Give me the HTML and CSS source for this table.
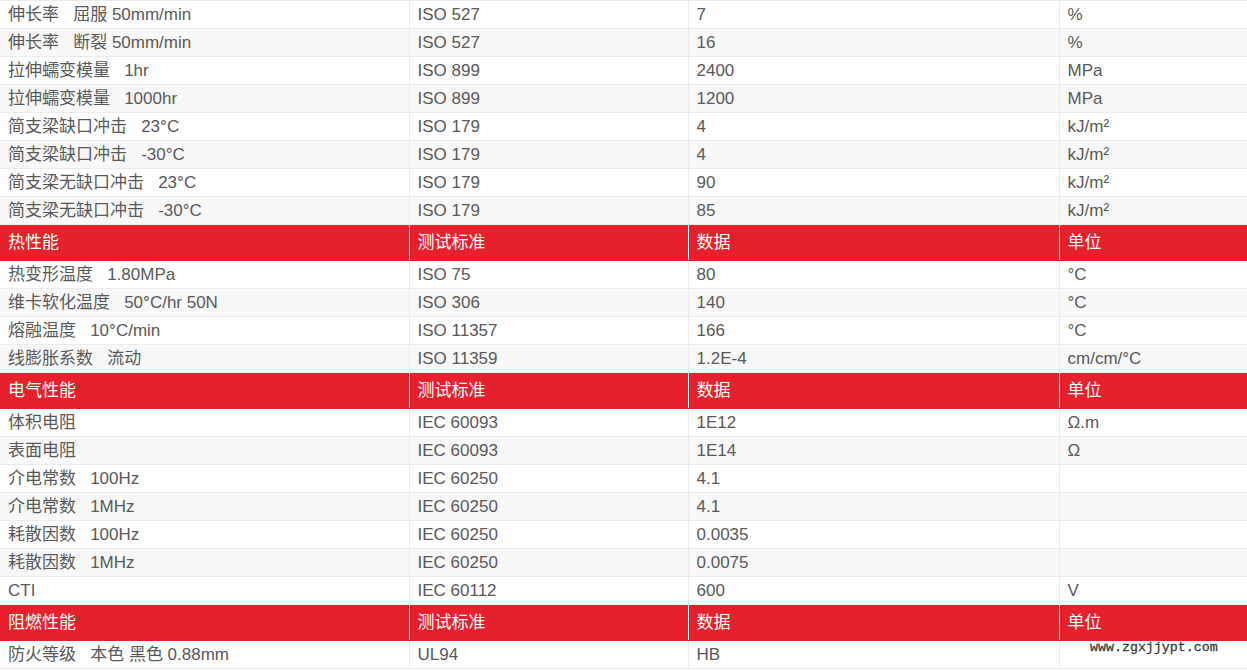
FILE: index.html
```html
<!DOCTYPE html>
<html lang="zh">
<head>
<meta charset="utf-8">
<title>物性表</title>
<link rel="stylesheet" href="styles.css">
</head>
<body>
<div class="wrap">
<table class="spec">
  <colgroup>
    <col class="c1"><col class="c2"><col class="c3"><col class="c4">
  </colgroup>
  <tbody>
    <tr><td>伸长率&nbsp;&nbsp; 屈服 50mm/min</td><td>ISO 527</td><td>7</td><td>%</td></tr>
    <tr class="alt"><td>伸长率&nbsp;&nbsp; 断裂 50mm/min</td><td>ISO 527</td><td>16</td><td>%</td></tr>
    <tr><td>拉伸蠕变模量&nbsp;&nbsp; 1hr</td><td>ISO 899</td><td>2400</td><td>MPa</td></tr>
    <tr class="alt"><td>拉伸蠕变模量&nbsp;&nbsp; 1000hr</td><td>ISO 899</td><td>1200</td><td>MPa</td></tr>
    <tr><td>简支梁缺口冲击&nbsp;&nbsp; 23°C</td><td>ISO 179</td><td>4</td><td>kJ/m²</td></tr>
    <tr class="alt"><td>简支梁缺口冲击&nbsp;&nbsp; -30°C</td><td>ISO 179</td><td>4</td><td>kJ/m²</td></tr>
    <tr><td>简支梁无缺口冲击&nbsp;&nbsp; 23°C</td><td>ISO 179</td><td>90</td><td>kJ/m²</td></tr>
    <tr class="alt"><td>简支梁无缺口冲击&nbsp;&nbsp; -30°C</td><td>ISO 179</td><td>85</td><td>kJ/m²</td></tr>
    <tr class="head"><td>热性能</td><td>测试标准</td><td>数据</td><td>单位</td></tr>
    <tr><td>热变形温度&nbsp;&nbsp; 1.80MPa</td><td>ISO 75</td><td>80</td><td>°C</td></tr>
    <tr class="alt"><td>维卡软化温度&nbsp;&nbsp; 50°C/hr 50N</td><td>ISO 306</td><td>140</td><td>°C</td></tr>
    <tr><td>熔融温度&nbsp;&nbsp; 10°C/min</td><td>ISO 11357</td><td>166</td><td>°C</td></tr>
    <tr class="alt"><td>线膨胀系数&nbsp;&nbsp; 流动</td><td>ISO 11359</td><td>1.2E-4</td><td>cm/cm/°C</td></tr>
    <tr class="head"><td>电气性能</td><td>测试标准</td><td>数据</td><td>单位</td></tr>
    <tr><td>体积电阻</td><td>IEC 60093</td><td>1E12</td><td>Ω.m</td></tr>
    <tr class="alt"><td>表面电阻</td><td>IEC 60093</td><td>1E14</td><td>Ω</td></tr>
    <tr><td>介电常数&nbsp;&nbsp; 100Hz</td><td>IEC 60250</td><td>4.1</td><td></td></tr>
    <tr class="alt"><td>介电常数&nbsp;&nbsp; 1MHz</td><td>IEC 60250</td><td>4.1</td><td></td></tr>
    <tr><td>耗散因数&nbsp;&nbsp; 100Hz</td><td>IEC 60250</td><td>0.0035</td><td></td></tr>
    <tr class="alt"><td>耗散因数&nbsp;&nbsp; 1MHz</td><td>IEC 60250</td><td>0.0075</td><td></td></tr>
    <tr><td>CTI</td><td>IEC 60112</td><td>600</td><td>V</td></tr>
    <tr class="head"><td>阻燃性能</td><td>测试标准</td><td>数据</td><td>单位</td></tr>
    <tr><td>防火等级&nbsp;&nbsp; 本色 黑色 0.88mm</td><td>UL94</td><td>HB</td><td></td></tr>
  </tbody>
</table>
<div class="watermark">www.zgxjjypt.com</div>
</div>
</body>
</html>
```

FILE: styles.css
```css
html, body {
  margin: 0;
  padding: 0;
  background: #fff;
}
.wrap {
  position: relative;
  width: 1247px;
}
.spec {
  width: 1247px;
  border-collapse: collapse;
  table-layout: fixed;
  font-family: "Liberation Sans", Arial, "Noto Sans CJK SC", sans-serif;
  font-size: 17px;
  color: #585858;
}
.c1 { width: 409px; }
.c2 { width: 279px; }
.c3 { width: 371px; }
.c4 { width: 188px; }
.spec td {
  padding: 4px 8px;
  height: 19px;
  line-height: 19px;
  border-top: 1px solid #ebebeb;
  border-bottom: 1px solid #ebebeb;
  border-left: 1px solid #ebebeb;
  white-space: nowrap;
  overflow: hidden;
  vertical-align: middle;
}
.spec td:first-child {
  border-left: none;
}
.spec tr.alt td {
  background: #f8f8f8;
}
.spec tr.head td {
  background: #e6212b;
  color: #fff;
  padding: 8px 8px;
  border-top-color: #e6212b;
  border-bottom-color: #e6212b;
  border-left-color: #fff;
}
.spec tr.head td:first-child {
  border-left: none;
}
.watermark {
  position: absolute;
  left: 1090px;
  top: 640px;
  font-family: "Liberation Mono", "DejaVu Sans Mono", monospace;
  font-size: 13.3px;
  line-height: 16px;
  color: #3a3a3a;
  -webkit-text-stroke: 0.3px #3a3a3a;
}
```
